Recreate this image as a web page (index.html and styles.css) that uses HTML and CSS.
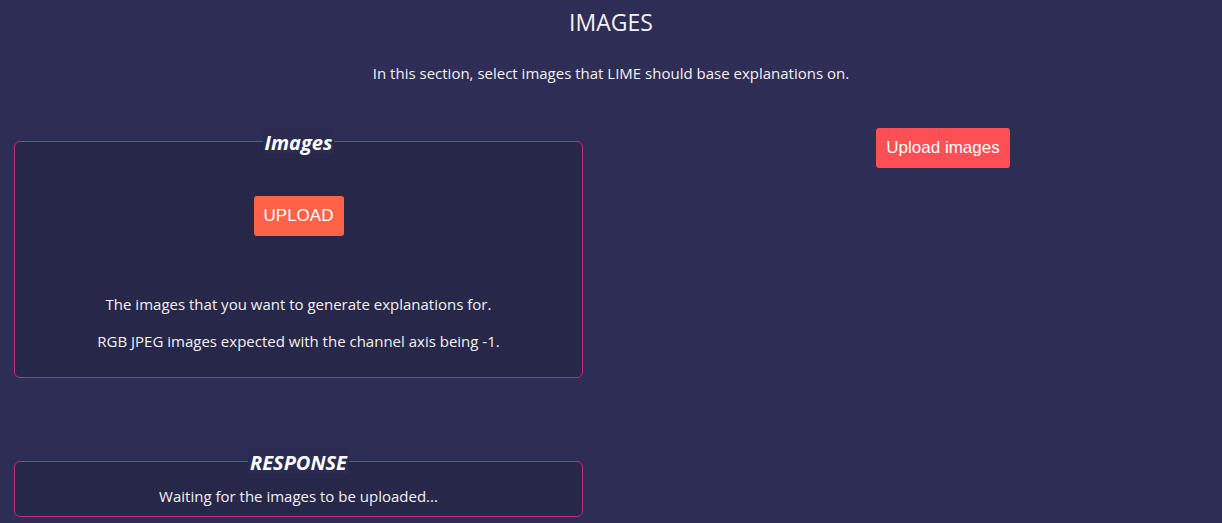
FILE: index.html
```html
<!DOCTYPE html>
<html lang="en">
<head>
<meta charset="utf-8">
<title>Images</title>
<link rel="stylesheet" href="styles.css">
</head>
<body>
<header class="page-head">
  <h1 class="title">IMAGES</h1>
  <p class="subtitle">In this section, select images that LIME should base explanations on.</p>
</header>
<main class="layout">
  <div class="left-col">
    <fieldset class="panel panel-images">
      <legend class="panel-legend">Images</legend>
      <div class="upload-row">
        <button class="btn btn-upload" type="button">UPLOAD</button>
      </div>
      <p class="panel-text first">The images that you want to generate explanations for.</p>
      <p class="panel-text">RGB JPEG images expected with the channel axis being -1.</p>
    </fieldset>
    <fieldset class="panel panel-response">
      <legend class="panel-legend">RESPONSE</legend>
      <p class="panel-text response-text">Waiting for the images to be uploaded...</p>
    </fieldset>
  </div>
  <div class="right-col">
    <button class="btn btn-images" type="button">Upload images</button>
  </div>
</main>
</body>
</html>
```

FILE: styles.css
```css
html, body {
  margin: 0;
  padding: 0;
}
body {
  background: #2e2d56;
  color: #f4f1f1;
  font-family: "Open Sans", "Noto Sans", sans-serif;
  font-size: 15px;
}
.page-head {
  text-align: center;
}
.title {
  margin: 9px 0 0;
  font-size: 23px;
  line-height: 26px;
  font-weight: 400;
}
.subtitle {
  margin: 28px 0 0;
  font-size: 15px;
  line-height: 20px;
}
.layout {
  display: grid;
  grid-template-columns: 569px 1fr;
  column-gap: 81px;
  padding-left: 14px;
  margin-top: 45px;
  align-items: start;
}
.left-col {
  display: flex;
  flex-direction: column;
  gap: 70px;
}
.panel {
  margin: 0;
  padding: 0 10px;
  border: 1px solid #c42a80;
  border-radius: 6px;
  background: #27274a;
  text-align: center;
  min-width: 0;
}
.panel-legend {
  margin: 0 auto;
  padding: 4px 2px 0;
  font-size: 20px;
  line-height: 22px;
  font-weight: 700;
  font-style: italic;
  background: #2b2a50;
  color: #ffffff;
}
.upload-row {
  margin-top: 42px;
}
.btn {
  border: 0;
  border-radius: 3px;
  color: #ffffff;
  font-family: "Liberation Sans", Arial, sans-serif;
  font-size: 17px;
  height: 40px;
  padding: 0 10px;
  cursor: pointer;
}
.btn-upload {
  background: #ff6347;
  width: 90px;
}
.btn-images {
  background: #fd4f54;
  width: 134px;
}
.panel-text {
  margin: 17px 0 0;
  font-size: 15px;
  line-height: 20px;
}
.panel-text.first {
  margin-top: 58px;
}
.panel-images {
  padding-bottom: 26px;
}
.response-text {
  margin: 12px 0 0;
}
.panel-response {
  padding-bottom: 10px;
}
.right-col {
  display: flex;
  justify-content: center;
}
```
